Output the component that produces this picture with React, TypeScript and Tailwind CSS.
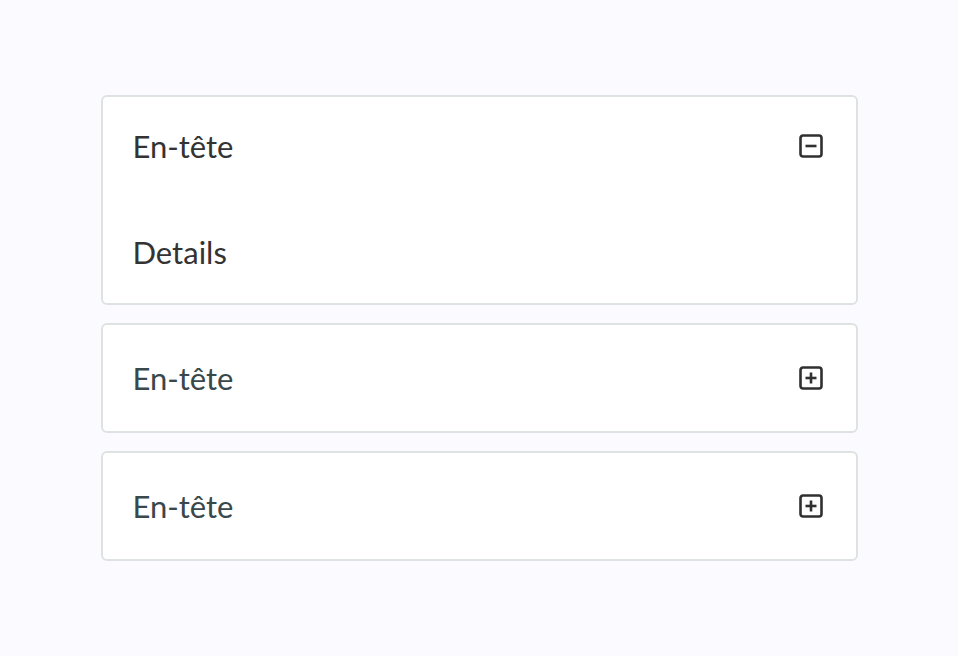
import React, { useState } from 'react';

const items = [
    { title: 'En-tête', body: 'Details' },
    { title: 'En-tête', body: 'Details' },
    { title: 'En-tête', body: 'Details' },
];

const BoxIcon: React.FC<{ open: boolean }> = ({ open }) => (
    <svg width="24" height="24" viewBox="0 0 24 24" fill="none" stroke="#303030" strokeWidth="2.6">
        <rect x="1.5" y="1.5" width="21" height="21" rx="2.5" />
        <line x1="6.5" y1="12" x2="17.5" y2="12" />
        {!open && <line x1="12" y1="6.5" x2="12" y2="17.5" />}
    </svg>
);

const App: React.FC = () => {
    const [open, setOpen] = useState<number | null>(0);

    return (
        <div className="min-h-screen bg-[#fbfaff] pt-[95px]" style={{ fontFamily: 'Lato, "Open Sans", sans-serif' }}>
            <div className="mx-auto flex w-[757px] flex-col gap-[18px]">
                {items.map((item, i) => {
                    const isOpen = open === i;
                    return (
                        <div key={i} className="rounded-[6px] border-2 border-[#dfe2e2] bg-white">
                            <button
                                className={`flex w-full items-center justify-between pl-[30px] pr-[33px] text-left ${isOpen ? 'h-[98px] text-[#333333]' : 'h-[106px] text-[#38484b]'}`}
                                onClick={() => setOpen(isOpen ? null : i)}
                            >
                                <span className="text-[31px] leading-[38px]">{item.title}</span>
                                <BoxIcon open={isOpen} />
                            </button>
                            {isOpen && (
                                <div className="pl-[30px] pt-[38px] pb-[32px] text-[31px] leading-[38px] text-[#333333]">
                                    {item.body}
                                </div>
                            )}
                        </div>
                    );
                })}
            </div>
        </div>
    );
};

export default App;
